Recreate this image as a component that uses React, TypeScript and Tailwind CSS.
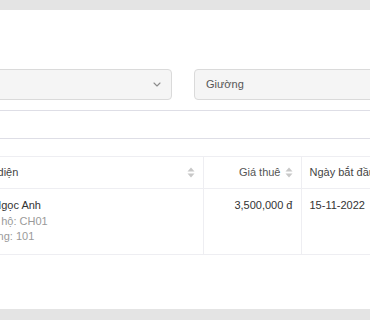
import React from 'react';

const SortIcon: React.FC = () => (
  <svg width="8" height="11" viewBox="0 0 8 11" className="shrink-0 text-[#c8c8c8]">
    <path d="M4 0.5 L7.5 4.5 H0.5 Z" fill="currentColor" />
    <path d="M4 10.5 L7.5 6.5 H0.5 Z" fill="currentColor" />
  </svg>
);

const Chevron: React.FC = () => (
  <svg width="8" height="5" viewBox="0 0 8 5" fill="none" className="text-[#8c8c8c]">
    <path d="M1 1 L4 4 L7 1" stroke="currentColor" strokeWidth="1.1" strokeLinecap="round" strokeLinejoin="round" />
  </svg>
);

const App: React.FC = () => {
  return (
    <div className="h-[320px] w-[370px] overflow-hidden bg-[#e4e4e4] pt-[10px] font-['Liberation_Sans',Arial,sans-serif] text-[11px]">
      <div className="h-[299px] bg-white pt-[59px]">
        <div className="-ml-[120px] flex gap-[22px]">
          <div className="flex h-[31px] w-[292px] shrink-0 items-center justify-end rounded-[4px] border border-[#dadada] bg-[#f5f5f5] pr-[10px]">
            <Chevron />
          </div>
          <div className="flex h-[31px] w-[300px] shrink-0 items-center rounded-[4px] border border-[#dadada] bg-[#f5f5f5] pl-[11px] text-[#555]">
            Giường
          </div>
        </div>

        <div className="-mx-4 mt-[10px] h-[29px] border border-[#dedee6] bg-white" />

        <table className="-ml-[30px] mt-[17px] w-[501px] table-fixed border-collapse">
          <colgroup>
            <col className="w-[233px]" />
            <col className="w-[98px]" />
            <col className="w-[170px]" />
          </colgroup>
          <thead>
            <tr className="border-y border-[#eeeef2]">
              <th className="border-r border-[#eeeef2] px-[8px] py-[8px] text-left font-normal leading-[15px] text-[#444]">
                <div className="flex items-center justify-between">
                  <span>Đại diện</span>
                  <SortIcon />
                </div>
              </th>
              <th className="border-r border-[#eeeef2] px-[8px] py-[8px] text-right font-normal leading-[15px] text-[#555]">
                <div className="flex items-center justify-end gap-[4px]">
                  <span>Giá thuê</span>
                  <SortIcon />
                </div>
              </th>
              <th className="whitespace-nowrap px-[8px] py-[8px] text-left font-normal leading-[15px] text-[#444]">
                Ngày bắt đầu
              </th>
            </tr>
          </thead>
          <tbody>
            <tr className="border-b border-[#eeeef2] align-top">
              <td className="border-r border-[#eeeef2] px-[8px] py-[9px] leading-[15.5px]">
                <div className="text-[#333]">Lê Ngọc Anh</div>
                <div className="text-[#9a9a9a]">Căn hộ: CH01</div>
                <div className="text-[#9a9a9a]">Phòng: 101</div>
              </td>
              <td className="border-r border-[#eeeef2] px-[8px] py-[9px] text-right leading-[15.5px] text-[#333]">
                3,500,000 đ
              </td>
              <td className="px-[8px] py-[9px] leading-[15.5px] text-[#333]">15-11-2022</td>
            </tr>
          </tbody>
        </table>
      </div>
    </div>
  );
};

export default App;
